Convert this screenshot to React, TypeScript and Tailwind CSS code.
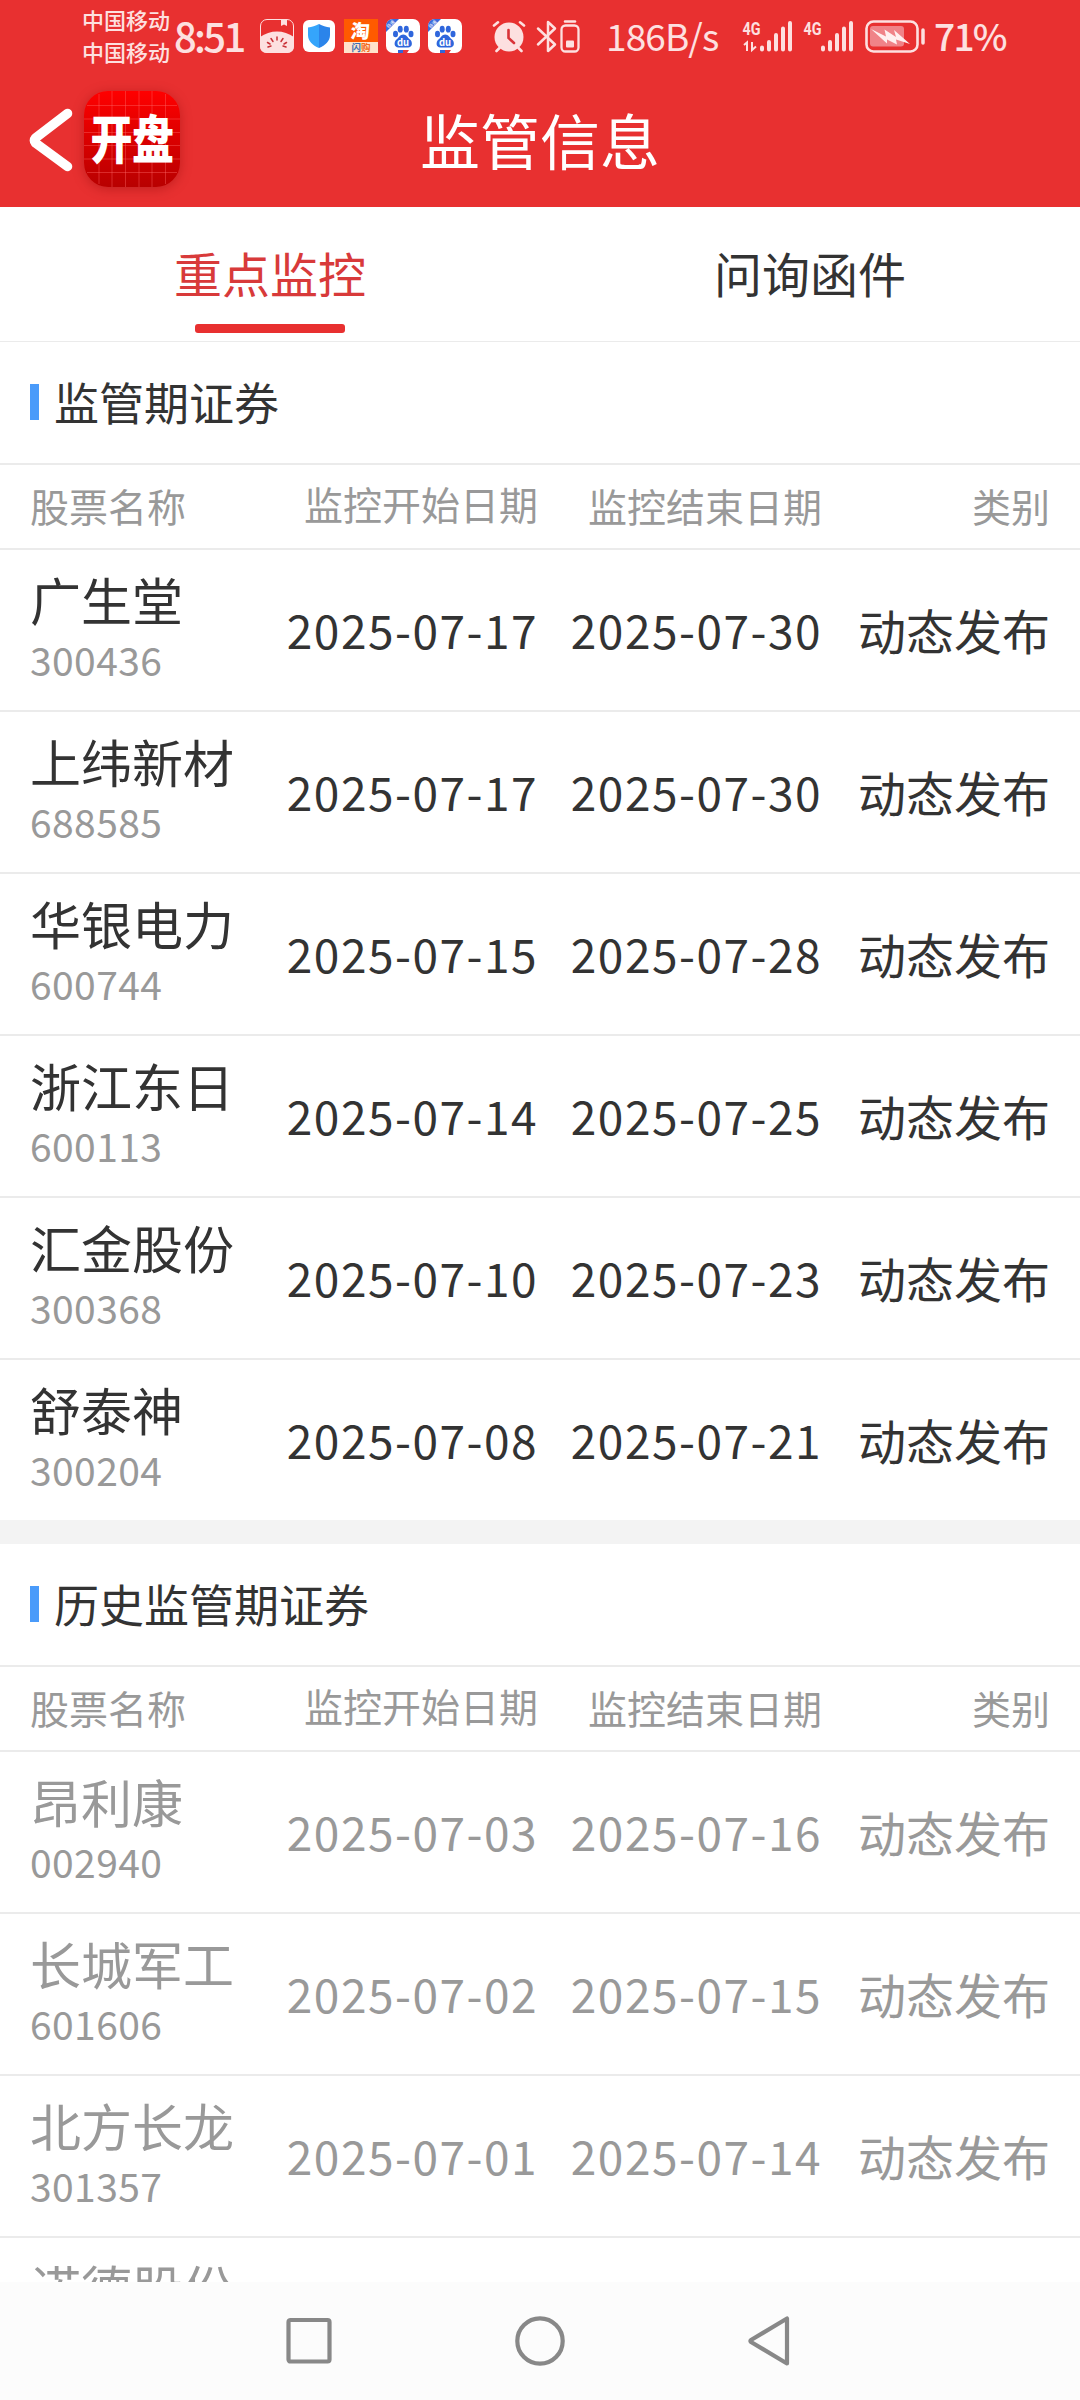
import clsx from "clsx";

type Stock = { name: string; code: string; start: string; end: string };

const current: Stock[] = [
    { name: "广生堂", code: "300436", start: "2025-07-17", end: "2025-07-30" },
    { name: "上纬新材", code: "688585", start: "2025-07-17", end: "2025-07-30" },
    { name: "华银电力", code: "600744", start: "2025-07-15", end: "2025-07-28" },
    { name: "浙江东日", code: "600113", start: "2025-07-14", end: "2025-07-25" },
    { name: "汇金股份", code: "300368", start: "2025-07-10", end: "2025-07-23" },
    { name: "舒泰神", code: "300204", start: "2025-07-08", end: "2025-07-21" },
];

const history: Stock[] = [
    { name: "昂利康", code: "002940", start: "2025-07-03", end: "2025-07-16" },
    { name: "长城军工", code: "601606", start: "2025-07-02", end: "2025-07-15" },
    { name: "北方长龙", code: "301357", start: "2025-07-01", end: "2025-07-14" },
    { name: "诺德股份", code: "", start: "", end: "" },
];

const MelonIcon = () => (
    <svg className="w-[34px] h-[34px]" viewBox="0 0 34 34">
        <rect x="0.5" y="0.5" width="33" height="33" rx="6.5" fill="none" stroke="#fde0e0" strokeWidth="1" />
        <path d="M0 18C5 14.500 11 12.500 17 12.500S29 14.500 34 18V27Q34 34 27 34H7Q0 34 0 27Z" fill="#fde0e0" />
        <path d="M21 0.500H27V7L24 5.500L21 7Z" fill="#fde0e0" />
        <path d="M17 18V21M11 19.500L13 22.500M23 19.500L21 22.500M7.500 23.500L10 25M26.500 23.500L24 25M8 28L11 27M26 28L23 27" stroke="#c93036" strokeWidth="1.500" strokeLinecap="round" />
    </svg>
);

const ShieldIcon = () => (
    <svg className="w-8 h-8 ml-[9px]" viewBox="0 0 32 32">
        <rect width="32" height="32" rx="6" fill="#fff" />
        <path d="M16 4C19.500 6 23 7 27 7.500V15C27 21 22.500 25.500 16 28Z" fill="#2b84ea" />
        <path d="M16 4C12.500 6 9 7 5 7.500V15C5 21 9.500 25.500 16 28Z" fill="#35a5fb" />
    </svg>
);

const TaobaoIcon = () => (
    <svg className="w-[34px] h-[34px] ml-[9px]" viewBox="0 0 34 34">
        <rect width="34" height="34" fill="#ff5a00" />
        <rect y="23" width="34" height="11" fill="#ffe3cb" />
        <text x="7.500" y="19" fontSize="19" fontWeight="800" fill="#fff" transform="skewX(-4)">淘</text>
        <text x="7.500" y="32" fontSize="9.500" fontWeight="700" fill="#f26a1c"><tspan fill="#3b6fb5">闪</tspan>购</text>
    </svg>
);

const BaiduIcon = () => (
    <svg className="w-[34px] h-[34px] ml-2" viewBox="0 0 34 34">
        <defs>
            <clipPath id="tile"><rect width="34" height="34" rx="7" /></clipPath>
        </defs>
        <g clipPath="url(#tile)">
            <rect width="34" height="34" fill="#fff" />
            <path d="M0 0H13L0 13Z" fill="#3a69dc" />
            <g fill="#2f66dc">
                <ellipse cx="9.500" cy="15" rx="2.500" ry="3.200" />
                <ellipse cx="14.200" cy="10.200" rx="2.500" ry="3.400" />
                <ellipse cx="20.300" cy="10.200" rx="2.500" ry="3.400" />
                <ellipse cx="25" cy="15" rx="2.500" ry="3.200" />
                <path d="M17.200 15.500C20.500 15.500 21.500 18.500 24 20.500C27 23 26.500 28.500 22 28.500H12.500C8 28.500 7.500 23 10.500 20.500C13 18.500 14 15.500 17.200 15.500Z" />
            </g>
            <path d="M12 34V31H18V34Z" fill="#2f66dc" />
            <path d="M17 34V31H23L21 34Z" fill="#e8353a" />
        </g>
        <text x="0" y="0" fontSize="4.500" fill="#fff" transform="translate(2.500 9.500) rotate(-45)">极速</text>
        <text x="17" y="26.500" textAnchor="middle" fontSize="9.500" fontWeight="700" fill="#fff">du</text>
    </svg>
);

const AlarmIcon = () => (
    <svg className="w-[34px] h-[33px] ml-[30px]" viewBox="0 0 34 33">
        <circle cx="17" cy="17" r="14.500" fill="#fde0e0" />
        <path d="M2 5.500L6 2.300M32 5.500L28 2.300M7.500 28L4.500 31M26.500 28L29.500 31" stroke="#fde0e0" strokeWidth="2.600" strokeLinecap="round" />
        <path d="M16.500 10V18L22 23" fill="none" stroke="#d93338" strokeWidth="2.600" strokeLinecap="round" />
    </svg>
);

const BluetoothIcon = () => (
    <svg className="w-[44px] h-[33px] ml-[10px]" viewBox="0 0 44 33">
        <path d="M2 8.500L19 24.500L12 31V2L19 8.500L2 24.500" fill="none" stroke="#fde0e0" strokeWidth="2.500" strokeLinejoin="round" strokeLinecap="round" />
        <rect x="25.500" y="5.500" width="17" height="26" rx="4" fill="none" stroke="#fde0e0" strokeWidth="2.300" />
        <path d="M29 1.500H39" stroke="#fde0e0" strokeWidth="2.500" strokeLinecap="round" />
        <rect x="30" y="20.500" width="8" height="7" rx="1" fill="#fde0e0" />
    </svg>
);

const SignalIcon = ({ active, className }: { active?: boolean; className: string }) => (
    <svg className={clsx("w-[52px] h-[33px]", className)} viewBox="0 0 52 33">
        <text x="0.500" y="15" fontFamily="Roboto" fontSize="18" fontWeight="700" fill="#fde0e0" textLength="18" lengthAdjust="spacingAndGlyphs">4G</text>
        {active && <path d="M2 25L5 22.500V31M10 22V30L14 26.500" fill="none" stroke="#fde0e0" strokeWidth="2" />}
        <path d="M20 27.500V29.500M27 22V29.500M34 15V29.500M41 8.500V29.500M48 3V29.500" stroke="#fde0e0" strokeWidth="4" strokeLinecap="round" />
    </svg>
);

const BatteryIcon = () => (
    <svg className="w-[60px] h-[33px] ml-[10px]" viewBox="0 0 60 33">
        <rect x="1.500" y="1.500" width="51" height="30" rx="7" fill="none" stroke="#fde0e0" strokeWidth="2.600" />
        <rect x="5" y="6" width="34" height="20.500" rx="3" fill="#f08388" />
        <path d="M6 9L21 16.500L19.500 9.500L31 17L29 10L45 24L31 19.500L32 24.500L22 19.500L22 23.500Z" fill="#fff0f0" />
        <path d="M58 10V23" stroke="#fde0e0" strokeWidth="3.500" strokeLinecap="round" />
    </svg>
);

const StatusBar = () => (
    <div className="flex items-start h-[76px] pl-[82px] text-[#fde0e0]">
        <div className="flex flex-col shrink-0 w-[92px] pt-[3px] text-[22px] leading-[32px] font-medium">
            <span>中国移动</span>
            <span>中国移动</span>
        </div>
        <span className="shrink-0 w-[86px] mt-[6px] text-[40px] leading-[58px] tracking-[-2.700px] font-medium">8:51</span>
        <div className="flex items-center shrink-0 mt-[19px] h-[34px]">
            <MelonIcon />
            <ShieldIcon />
            <TaobaoIcon />
            <BaiduIcon />
            <BaiduIcon />
            <AlarmIcon />
            <BluetoothIcon />
        </div>
        <span className="shrink-0 w-[162px] pl-[26px] mt-[6px] text-[37px] leading-[58px] tracking-[-0.900px] whitespace-nowrap">186B/s</span>
        <div className="flex items-center shrink-0 mt-[19px] h-[34px]">
            <SignalIcon active className="ml-0" />
            <SignalIcon className="ml-[9px]" />
            <BatteryIcon />
        </div>
        <span className="ml-[9px] mt-[6px] text-[37px] leading-[58px] tracking-[-1.700px] font-medium">71%</span>
    </div>
);

const TitleBar = () => (
    <div className="flex items-center h-[131px] pb-[1px]">
        <div className="flex items-center w-[360px] pl-[28px]">
            <svg className="w-[48px] h-[66px] mt-[-3px]" viewBox="0 0 48 66">
                <path d="M39.500 6.500L7.500 31Q5.500 33.500 7.500 36L39.500 59.500" fill="none" stroke="#fff" strokeWidth="9.500" strokeLinecap="round" strokeLinejoin="round" />
            </svg>
            <div className="flex items-center justify-center w-24 h-24 ml-2 mt-[-4px] rounded-[24px] bg-linear-to-b from-[#ff0000] to-[#b80000] shadow-[0_2px_12px_rgba(120,0,0,0.35)] relative">
                <svg className="absolute inset-0 w-24 h-24" viewBox="0 0 96 96">
                    <path d="M15 3V93M28 0V96M41.500 0V96M55 0V96M68 0V96M81.500 3V93M3 14.500H93M0 28H96M0 41.500H96M0 54.500H96M0 68H96M3 81.500H93" stroke="#ff6a6a" strokeOpacity="0.400" strokeWidth="1" />
                </svg>
                <span className="relative mt-[-6px] text-[42px] leading-[54px] font-black tracking-[-0.500px] text-white scale-y-[1.250]">开盘</span>
            </div>
        </div>
        <h1 className="w-[360px] mt-[-5px] text-center text-[60px] leading-[80px] text-white">监管信息</h1>
    </div>
);

const Tabs = () => (
    <div className="flex h-[135px] border-b border-[#ebebeb] text-[48px] leading-[70px]">
        <div className="flex flex-col items-center w-1/2 pt-[30px] text-[#d83a3a]">
            <span>重点监控</span>
            <div className="w-[150px] h-[9px] mt-[17px] rounded-[3px] bg-[#e83030]" />
        </div>
        <div className="w-1/2 pt-[30px] text-center">问询函件</div>
    </div>
);

const SectionTitle = ({ title }: { title: string }) => (
    <div className="flex items-center h-[123px] pl-[30px] border-b-2 border-[#ebebeb]">
        <div className="w-[9px] h-9 mt-[-1px] bg-[#4a9bfa]" />
        <h2 className="ml-[15px] mt-[-1px] text-[45px] leading-[64px]">{title}</h2>
    </div>
);

const StockTable = ({ title, stocks, muted }: { title: string; stocks: Stock[]; muted?: boolean }) => (
    <section>
        <SectionTitle title={title} />
        <div className="grid grid-cols-[240px_268px_284px_1fr] items-center h-[85px] pb-[3px] px-[30px] border-b-2 border-[#ebebeb] text-[39px] leading-[56px] text-[#999] text-right">
            <span className="text-left">股票名称</span>
            <span className="pb-[5px]">监控开始日期</span>
            <span>监控结束日期</span>
            <span>类别</span>
        </div>
        {stocks.map((stock) => (
            <div key={stock.name} className={clsx("grid grid-cols-[240px_268px_284px_1fr] items-center h-[162px] pb-[3px] px-[30px] border-b-2 border-[#ebebeb] last:border-b-0 last:h-[160px] text-right", muted && "text-[#999]")}>
                <div className="flex flex-col mt-[-5px] text-left">
                    <span className="text-[51px] leading-[66px]">{stock.name}</span>
                    <span className="h-[54px] text-[39px] leading-[54px] tracking-[0.400px] text-[#999]">{stock.code}</span>
                </div>
                <span className="text-[46px] leading-[66px] tracking-[1.500px]">{stock.start}</span>
                <span className="text-[46px] leading-[66px] tracking-[1.500px]">{stock.end}</span>
                <span className="text-[48px] leading-[66px]">{stock.start && "动态发布"}</span>
            </div>
        ))}
    </section>
);

const NavBar = () => (
    <nav className="flex items-center justify-center gap-[181px] h-[118px] bg-[#fcfcfc]">
        <svg className="w-[50px] h-[50px]" viewBox="0 0 50 50" fill="none" stroke="#888" strokeWidth="4.200">
            <rect x="4.500" y="4" width="41" height="41.500" rx="2" />
        </svg>
        <svg className="w-[50px] h-[50px]" viewBox="0 0 50 50" fill="none" stroke="#888" strokeWidth="4.200">
            <circle cx="25" cy="25" r="22.700" />
        </svg>
        <svg className="w-[50px] h-[50px]" viewBox="0 0 50 50" fill="none" stroke="#888" strokeWidth="4.200" strokeLinejoin="round">
            <path d="M41 2.500V47.500L5 26Q4 25 5 24Z" />
        </svg>
    </nav>
);

const App = () => {
    return (
        <div className="flex flex-col w-[1080px] h-[2400px] overflow-hidden bg-white text-[#333] font-['Noto_Sans_CJK_SC',sans-serif]">
            <header className="h-[207px] shrink-0 bg-[#e83030]">
                <StatusBar />
                <TitleBar />
            </header>
            <main className="h-[2075px] overflow-hidden">
                <Tabs />
                <StockTable title="监管期证券" stocks={current} />
                <div className="h-6 bg-[#f3f3f3]" />
                <StockTable title="历史监管期证券" stocks={history} muted />
            </main>
            <NavBar />
        </div>
    );
};

export default App;
